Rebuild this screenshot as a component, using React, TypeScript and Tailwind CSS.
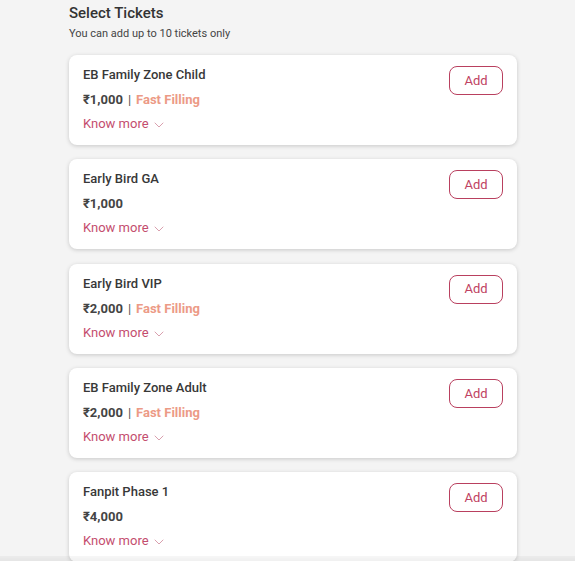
import React from "react";

type Ticket = { name: string; price: string; fast: boolean };

const tickets: Ticket[] = [
  { name: "EB Family Zone Child", price: "₹1,000", fast: true },
  { name: "Early Bird GA", price: "₹1,000", fast: false },
  { name: "Early Bird VIP", price: "₹2,000", fast: true },
  { name: "EB Family Zone Adult", price: "₹2,000", fast: true },
  { name: "Fanpit Phase 1", price: "₹4,000", fast: false },
];

function Chevron() {
  return (
    <svg width="10" height="6" viewBox="0 0 10 6" fill="none" className="ml-[5px] mt-[2px]">
      <path d="M1 1l4 4 4-4" stroke="#d9a0ae" strokeWidth="1" strokeLinecap="round" strokeLinejoin="round" />
    </svg>
  );
}

function Card({ t }: { t: Ticket }) {
  return (
    <div className="flex justify-between rounded-[8px] bg-white pl-[14px] pr-[14px] pt-[11px] pb-[12px] shadow-[0_1px_4px_rgba(0,0,0,0.18)]">
      <div className="flex flex-col">
        <div className="text-[13px] leading-[18px] font-medium text-[#383838]">{t.name}</div>
        <div className="mt-[7px] flex items-center text-[13px] leading-[18px] font-bold text-[#444]">
          <span>{t.price}</span>
          {t.fast && (
            <>
              <span className="mx-[5px] font-normal text-[#555]">|</span>
              <span className="text-[#ec9a86]">Fast Filling</span>
            </>
          )}
        </div>
        <div className="mt-[6px] flex items-center text-[13px] leading-[18px] text-[#c44d6e]">
          <span>Know more</span>
          <Chevron />
        </div>
      </div>
      <div>
        <button className="h-[29px] w-[54px] rounded-[8px] border border-[#b9405f] bg-white text-[13px] text-[#c04262]">
          Add
        </button>
      </div>
    </div>
  );
}

export default function App() {
  return (
    <div
      className="min-h-[561px] w-full bg-[#f4f4f4]"
      style={{ fontFamily: "Roboto, 'Liberation Sans', sans-serif" }}
    >
      <div className="ml-[69px] w-[448px] pt-[4px]">
        <div className="text-[15px] leading-[18px] font-medium text-[#333]">Select Tickets</div>
        <div className="mt-[5px] text-[11px] leading-[14px] text-[#444]">You can add up to 10 tickets only</div>
        <div className="mt-[14px] flex flex-col gap-[14.25px] pb-[20px]">
          {tickets.map((t) => (
            <Card key={t.name} t={t} />
          ))}
        </div>
      </div>
      <div className="fixed bottom-0 left-0 right-0 h-[5px] bg-gradient-to-b from-[rgba(0,0,0,0.03)] to-[rgba(0,0,0,0.06)]" />
    </div>
  );
}
